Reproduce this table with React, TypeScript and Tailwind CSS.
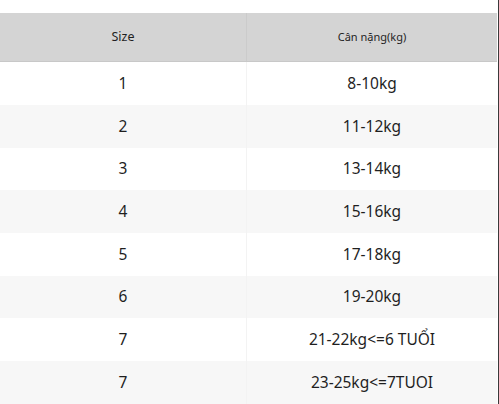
const rows: { size: string; weight: string; h: string }[] = [
  { size: '1', weight: '8-10kg', h: 'h-[43px]' },
  { size: '2', weight: '11-12kg', h: 'h-[43px]' },
  { size: '3', weight: '13-14kg', h: 'h-[42px]' },
  { size: '4', weight: '15-16kg', h: 'h-[43px]' },
  { size: '5', weight: '17-18kg', h: 'h-[43px]' },
  { size: '6', weight: '19-20kg', h: 'h-[42px]' },
  { size: '7', weight: '21-22kg<=6 TUỔI', h: 'h-[43px]' },
  { size: '7', weight: '23-25kg<=7TUOI', h: 'h-[43px]' },
]

export default function App() {
  return (
    <div className="w-[499px] h-[404px] overflow-hidden bg-white flex font-['Noto_Sans',sans-serif] text-[#1f1f1f]">
      <div className="flex-1 flex flex-col pt-[13px] pr-px">
        <div className="h-[49px] bg-[#d4d4d4] grid grid-cols-[247px_1fr] border-b border-[#c8c8c8]">
          <div className="flex items-center justify-center text-[12.5px] border-r border-[#cbcbcb]">Size</div>
          <div className="flex items-center justify-center text-[11px]">Cân nặng(kg)</div>
        </div>
        {rows.map((r, i) => (
          <div
            key={i}
            className={`${r.h} grid grid-cols-[247px_1fr] text-[15.5px] ${i % 2 === 1 ? 'bg-[#f7f7f7]' : 'bg-white'}`}
          >
            <div className="flex items-center justify-center border-r border-[#f3f3f3]">{r.size}</div>
            <div className="flex items-center justify-center">{r.weight}</div>
          </div>
        ))}
      </div>
      <div className="w-px bg-[#3a3a3a]" />
    </div>
  )
}
